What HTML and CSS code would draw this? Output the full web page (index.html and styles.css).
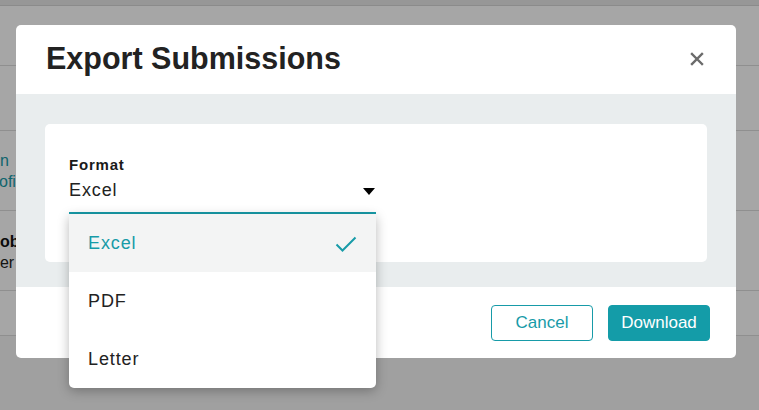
FILE: index.html
```html
<!DOCTYPE html>
<html lang="en">
<head>
<meta charset="utf-8">
<title>Export Submissions</title>
<link rel="stylesheet" href="styles.css">
</head>
<body>
<div class="page">
  <div class="topbar"></div>
  <div class="row row-a"></div>
  <div class="row row-b"></div>
  <div class="row row-c">
    <div class="frag link f1">Design</div>
    <div class="frag link f2">Profile</div>
  </div>
  <div class="row row-d">
    <div class="frag strong f3">Job</div>
    <div class="frag f4">Owner</div>
  </div>
  <div class="row row-e"></div>
</div>

<div class="overlay">
  <div class="modal">
    <header class="modal-head">
      <h1 class="modal-title">Export Submissions</h1>
      <button class="close-btn" aria-label="Close">
        <svg width="14" height="14" viewBox="0 0 14 14"><path d="M2 2 L12 12 M12 2 L2 12" stroke="#6b6b6b" stroke-width="2.4" stroke-linecap="square"/></svg>
      </button>
    </header>
    <div class="modal-body">
      <div class="card">
        <div class="field">
          <div class="field-label">Format</div>
          <div class="select">
            <span class="select-value">Excel</span>
            <svg class="select-arrow" width="12" height="7" viewBox="0 0 12 7"><path d="M0 0 L12 0 L6 7 Z" fill="#000"/></svg>
          </div>
          <ul class="menu">
            <li class="menu-item selected">Excel
              <svg class="check" width="22" height="16" viewBox="0 0 22 16"><path d="M1.5 8.5 L7.5 14.5 L20.5 1.5" fill="none" stroke="#179ba8" stroke-width="2"/></svg>
            </li>
            <li class="menu-item">PDF</li>
            <li class="menu-item">Letter</li>
          </ul>
        </div>
      </div>
    </div>
    <footer class="modal-foot">
      <button class="btn btn-outline">Cancel</button>
      <button class="btn btn-primary">Download</button>
    </footer>
  </div>
</div>
</body>
</html>
```

FILE: styles.css
```css
* { box-sizing: border-box; }
html, body { margin: 0; padding: 0; }
body {
  width: 759px;
  height: 410px;
  overflow: hidden;
  font-family: "Liberation Sans", Arial, sans-serif;
  background: #f6f6f6;
  position: relative;
}

/* background page */
.page { background: #fff; }
.topbar { height: 6px; background: #e8e8e8; border-bottom: 1px solid #d6d6d6; }
.row { border-bottom: 1px solid #dcdcdc; overflow: hidden; }
.row-a { height: 60px; }
.row-b { height: 65px; }
.row-c { height: 80px; padding-top: 19px; }
.row-d { height: 80px; padding-top: 20px; }
.row-e { height: 45px; }
.frag { font-size: 16px; line-height: 21px; white-space: nowrap; color: #222; }
.link { color: #179ba8; }
.strong { font-weight: bold; color: #111; }
.f1 { margin-left: -41px; }
.f2 { margin-left: -17px; }
.f3 { margin-left: -9px; }
.f4 { margin-left: -33px; }

/* overlay */
.overlay {
  position: absolute;
  inset: 0;
  background: rgba(0, 0, 0, 0.35);
  padding: 25px 0 0 16px;
}
.modal {
  width: 720px;
  background: #fff;
  border-radius: 5px;
  display: flex;
  flex-direction: column;
}
.modal-head {
  height: 69px;
  display: flex;
  align-items: center;
  justify-content: space-between;
  padding: 0 30px 0 30px;
}
.modal-title {
  margin: 0;
  font-size: 30.5px;
  font-weight: bold;
  color: #222;
  line-height: 1;
  padding-bottom: 2px;
}
.close-btn {
  border: 0;
  background: none;
  padding: 0;
  width: 14px;
  height: 14px;
  margin-right: 2px;
  margin-top: -2px;
  display: flex;
}
.modal-body {
  background: #e9edee;
  padding: 30px 29px 25px 29px;
}
.card {
  background: #fff;
  border-radius: 5px;
  height: 138px;
  padding: 32px 24px 0 24px;
}
.field { width: 307px; position: relative; }
.field-label {
  font-size: 15px;
  font-weight: bold;
  letter-spacing: 0.8px;
  color: #1a1a1a;
  line-height: 18px;
}
.select {
  display: flex;
  align-items: flex-start;
  justify-content: space-between;
  height: 40px;
  border-bottom: 2px solid #179ba8;
  padding-top: 5px;
}
.select-value {
  font-size: 18px;
  line-height: 22px;
  letter-spacing: 0.9px;
  color: #222;
}
.select-arrow { margin-right: 1px; margin-top: 9px; }

.menu {
  position: absolute;
  left: 0;
  right: 0;
  top: 100%;
  margin: 0;
  padding: 0;
  list-style: none;
  background: #fff;
  border-radius: 0 0 5px 5px;
  box-shadow: 0 3px 12px rgba(0, 0, 0, 0.28);
  overflow: hidden;
  z-index: 2;
}
.menu-item {
  height: 58px;
  display: flex;
  align-items: center;
  justify-content: space-between;
  padding: 0 19px 0 19px;
  font-size: 18px;
  letter-spacing: 0.9px;
  color: #222;
}
.menu-item.selected { background: #f3f4f4; color: #179ba8; }
.check { margin-top: 2px; }

.modal-foot {
  height: 71px;
  display: flex;
  justify-content: flex-end;
  align-items: flex-start;
  gap: 15px;
  padding: 18px 26px 0 0;
}
.btn {
  width: 102px;
  height: 36px;
  border-radius: 4px;
  font-family: "Liberation Sans", Arial, sans-serif;
  font-size: 17px;
  cursor: pointer;
}
.btn-outline { background: #fff; border: 1px solid #179ba8; color: #179ba8; }
.btn-primary { background: #149ca8; border: 1px solid #149ca8; color: #fff; }
```
